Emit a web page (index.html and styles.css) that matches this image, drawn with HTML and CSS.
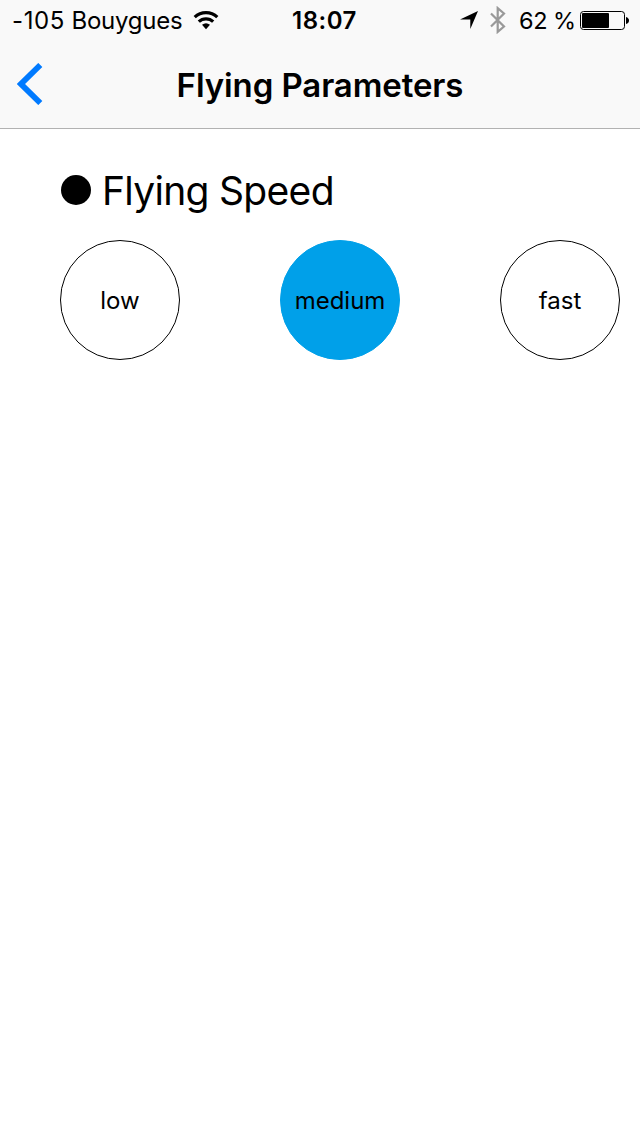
FILE: index.html
```html
<!DOCTYPE html>
<html lang="en">
<head>
<meta charset="utf-8">
<title>Flying Parameters</title>
<link rel="stylesheet" href="styles.css">
</head>
<body>
<header class="top">
  <div class="status">
    <div class="status-left">
      <span class="carrier"><span class="signal">-105</span> Bouygues</span>
      <svg class="wifi" width="26" height="20" viewBox="0 0 26 20"><g fill="none" stroke="#000" stroke-width="3.200"><path d="M1.700 7.200a16.300 16.300 0 0 1 22.600 0"/><path d="M5.800 11.700a10.400 10.400 0 0 1 14.400 0"/></g><path d="M13 19.200l-4-4.400q4-3 8 0z"/></svg>
    </div>
    <span class="clock">18:07</span>
    <div class="status-right">
      <svg class="location" width="18" height="18" viewBox="0 0 18 18"><path d="M18 0L10.300 18V8.500H0z"/></svg>
      <svg class="bluetooth" width="16" height="28" viewBox="0 0 16 28"><path d="M1 7.500l13 13-6.300 5.400V2.100L14 7.500l-13 13" fill="none" stroke="#999" stroke-width="2.200"/></svg>
      <span class="percent">62 %</span>
      <svg class="battery" width="49" height="19" viewBox="0 0 49 19"><rect x=".5" y=".5" width="44" height="18" rx="3" fill="none" stroke="#000"/><rect x="2" y="2" width="27" height="15" rx="1"/><path d="M46 6q3 1 3 3.500t-3 3.500z"/></svg>
    </div>
  </div>
  <nav class="nav">
    <svg class="back" width="26" height="42" viewBox="0 0 26 42"><path d="M23.300 2L4 21l19.300 19" fill="none" stroke="#007aff" stroke-width="5.800"/></svg>
    <h1 class="title">Flying Parameters</h1>
    <span></span>
  </nav>
</header>
<main class="content">
  <h2 class="heading"><span class="bullet"></span><span class="label">Flying Speed</span></h2>
  <div class="speeds">
    <button class="speed">low</button>
    <button class="speed selected">medium</button>
    <button class="speed">fast</button>
  </div>
</main>
</body>
</html>
```
FILE: styles.css
```css
* { box-sizing: border-box; }
body { margin: 0; background: #fff; color: #000; font-family: Inter, sans-serif; }
svg { display: block; flex: none; }
.top { height: 129px; background: #f9f9f9; border-bottom: 1px solid #b2b2b2; }
.status { height: 40px; display: grid; grid-template-columns: 1fr auto 1fr; align-items: center; font-size: 24px; line-height: 38px; white-space: nowrap; }
.carrier, .clock, .percent { padding-top: 2px; }
.status-left { display: flex; align-items: center; padding-left: 12px; gap: 11px; }
.carrier { width: 170px; letter-spacing: -.25px; }
.signal { letter-spacing: .6px; }
.clock { font-weight: 600; padding-left: 9px; letter-spacing: .5px; }
.status-right { display: flex; align-items: center; justify-content: flex-end; padding-right: 11px; }
.location { margin-right: 12px; }
.bluetooth { margin-right: 13px; }
.percent { width: 55px; margin-right: 6px; letter-spacing: -.2px; word-spacing: -1px; font-size: 23.500px; }
.nav { height: 88px; display: grid; grid-template-columns: 1fr auto 1fr; align-items: center; }
.back { margin-left: 17px; }
.title { margin: 2px 0 0; font-size: 33px; font-weight: 600; line-height: 86px; letter-spacing: -.1px; }
.content { padding: 31px 20px 0 60px; }
.heading { margin: 0; height: 60px; display: flex; align-items: center; gap: 11px; font-size: 39px; font-weight: 400; letter-spacing: -.7px; }
.bullet { width: 30px; height: 30px; margin-left: 1px; border-radius: 50%; background: #000; }
.speeds { display: flex; justify-content: space-between; margin-top: 20px; }
.speed { width: 120px; height: 120px; padding: 0; border: 1px solid #000; border-radius: 50%; background: #fff; color: #000; font: 400 24px Inter, sans-serif; }
.selected { background: #00a0e9; border-color: #00a0e9; }
```
